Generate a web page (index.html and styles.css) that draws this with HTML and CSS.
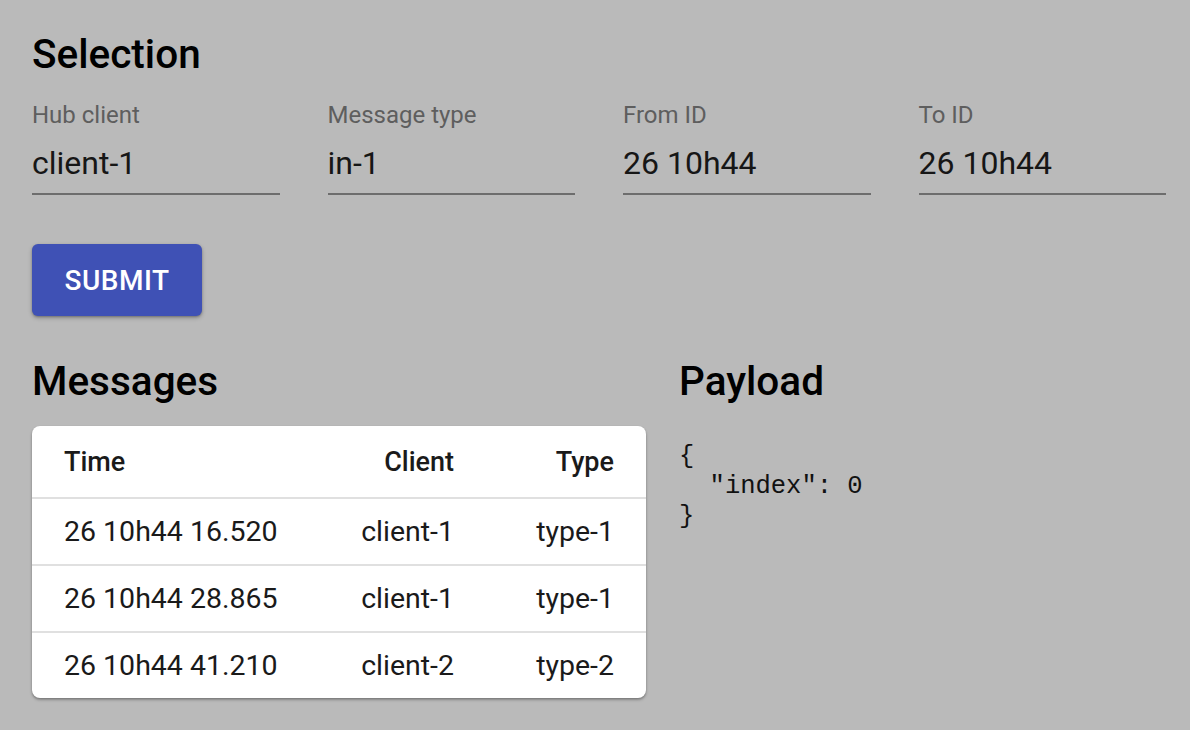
FILE: index.html
```html
<!DOCTYPE html>
<html>
<head>
<meta charset="utf-8">
<link rel="stylesheet" href="styles.css">
</head>
<body>
<div class="page">
  <h1 class="title">Selection</h1>
  <div class="fields">
    <div class="field"><span class="label">Hub client</span><span class="value">client-1</span></div>
    <div class="field"><span class="label">Message type</span><span class="value">in-1</span></div>
    <div class="field"><span class="label">From ID</span><span class="value">26 10h44</span></div>
    <div class="field"><span class="label">To ID</span><span class="value">26 10h44</span></div>
  </div>
  <button class="submit">SUBMIT</button>
  <div class="bottom">
    <section class="messages">
      <h2 class="title2">Messages</h2>
      <div class="card">
        <table class="table">
          <thead>
            <tr><th class="c-time">Time</th><th class="c-client">Client</th><th class="c-type">Type</th></tr>
          </thead>
          <tbody>
            <tr><td class="c-time">26 10h44 16.520</td><td class="c-client">client-1</td><td class="c-type">type-1</td></tr>
            <tr><td class="c-time">26 10h44 28.865</td><td class="c-client">client-1</td><td class="c-type">type-1</td></tr>
            <tr><td class="c-time">26 10h44 41.210</td><td class="c-client">client-2</td><td class="c-type">type-2</td></tr>
          </tbody>
        </table>
      </div>
    </section>
    <section class="payload">
      <h2 class="title2">Payload</h2>
      <pre class="json">{
  "index": 0
}</pre>
    </section>
  </div>
</div>
</body>
</html>
```

FILE: styles.css
```css
html, body {
  margin: 0;
  padding: 0;
  background: #bababa;
}
body {
  font-family: Roboto, "Liberation Sans", sans-serif;
  color: rgba(0,0,0,0.87);
}
.page {
  padding: 30px 24px 30px 32px;
}
.title {
  margin: 0;
  font-size: 40.5px;
  line-height: 48px;
  font-weight: 500;
  color: #000;
}
.fields {
  display: grid;
  grid-template-columns: repeat(4, 1fr);
  column-gap: 48px;
  margin-top: 23px;
}
.field {
  display: flex;
  flex-direction: column;
  border-bottom: 2px solid #6d6d6d;
  padding-bottom: 10px;
}
.label {
  font-size: 24px;
  line-height: 28px;
  color: #5e5e5e;
}
.value {
  margin-top: 14px;
  font-size: 32px;
  line-height: 40px;
  color: #161616;
}
.submit {
  display: block;
  margin-top: 49px;
  width: 170px;
  height: 72px;
  border: none;
  border-radius: 6px;
  background: #3f51b5;
  color: #fff;
  font-family: Roboto, "Liberation Sans", sans-serif;
  font-size: 28px;
  font-weight: 500;
  letter-spacing: 0.5px;
  box-shadow: 0 2px 4px rgba(0,0,0,0.25), 0 1px 2px rgba(0,0,0,0.2);
  padding: 0;
}
.bottom {
  display: grid;
  grid-template-columns: 614px 1fr;
  column-gap: 33px;
  margin-top: 41px;
}
.title2 {
  margin: 0;
  font-size: 40.5px;
  line-height: 48px;
  font-weight: 500;
  color: #000;
}
.card {
  margin-top: 21px;
  background: #fff;
  border-radius: 8px;
  box-shadow: 0 2px 3px rgba(0,0,0,0.25), 0 1px 2px rgba(0,0,0,0.15);
  overflow: hidden;
}
.table {
  width: 100%;
  border-collapse: collapse;
  font-size: 28.5px;
  color: #1a1a1a;
}
.table th {
  height: 71px;
  font-weight: 500;
  font-size: 27px;
  padding: 0;
  border-bottom: 2px solid #e0e0e0;
}
.table td {
  height: 65px;
  padding: 0;
  border-bottom: 2px solid #e0e0e0;
}
.table tbody tr:last-child td {
  border-bottom: none;
  height: 65px;
}
.c-time {
  text-align: left;
  padding-left: 32px !important;
}
.c-client {
  text-align: right;
}
.c-type {
  text-align: right;
  padding-right: 32px !important;
  width: 160px;
}
.json {
  margin: 21px 0 0 0;
  padding-top: 16px;
  font-family: "Liberation Mono", "Courier New", monospace;
  font-size: 25.5px;
  line-height: 30px;
  color: #111;
}
```
